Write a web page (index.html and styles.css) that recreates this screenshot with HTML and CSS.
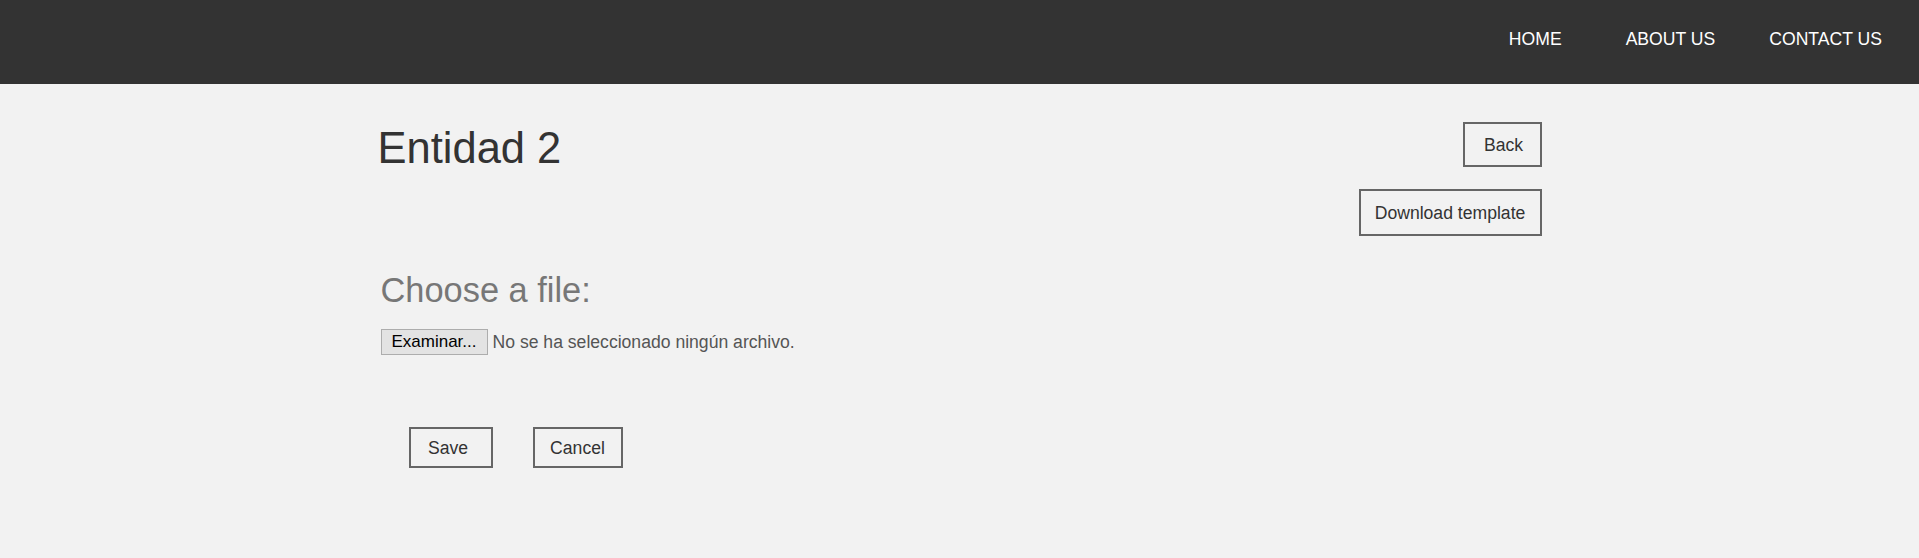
FILE: index.html
```html
<!DOCTYPE html>
<html lang="es">
<head>
<meta charset="utf-8">
<title>Entidad 2</title>
<link rel="stylesheet" href="styles.css">
</head>
<body>
<header class="site-header">
  <nav class="nav">
    <a class="nav-link nav-home" href="#">HOME</a>
    <a class="nav-link nav-about" href="#">ABOUT US</a>
    <a class="nav-link nav-contact" href="#">CONTACT US</a>
  </nav>
</header>
<main class="container">
  <div class="top-row">
    <h1 class="title">Entidad 2</h1>
    <div class="actions">
      <button class="btn btn-back">Back</button>
      <button class="btn btn-download">Download template</button>
    </div>
  </div>
  <section class="upload">
    <h2 class="upload-title">Choose a file:</h2>
    <div class="file-row">
      <button class="file-btn">Examinar...</button>
      <span class="file-name">No se ha seleccionado ningún archivo.</span>
    </div>
    <div class="form-actions">
      <button class="btn btn-save">Save</button>
      <button class="btn btn-cancel">Cancel</button>
    </div>
  </section>
</main>
</body>
</html>
```

FILE: styles.css
```css
html, body {
  margin: 0;
  padding: 0;
}
body {
  background: #f2f2f2;
  font-family: "Liberation Sans", Arial, sans-serif;
  color: #333;
}
.site-header {
  height: 84px;
  background: #333333;
  box-sizing: border-box;
}
.nav {
  display: flex;
  justify-content: flex-end;
  padding-top: 29px;
  padding-right: 37px;
}
.nav-link {
  color: #ffffff;
  text-decoration: none;
  font-size: 17.6px;
  line-height: 20px;
}
.nav-about {
  margin-left: 64px;
}
.nav-contact {
  margin-left: 54px;
}
.container {
  width: 1164px;
  margin: 0 auto;
}
.top-row {
  display: flex;
  justify-content: space-between;
  align-items: flex-start;
  padding-top: 38px;
}
.title {
  margin: 2px 0 0 0;
  font-size: 43.5px;
  line-height: 48px;
  font-weight: normal;
  color: #333;
}
.actions {
  display: flex;
  flex-direction: column;
  align-items: flex-end;
  gap: 22px;
}
.btn {
  box-sizing: border-box;
  display: flex;
  align-items: center;
  justify-content: center;
  padding: 0;
  background: transparent;
  border: 2px solid #666;
  border-radius: 0;
  color: #333;
  font-family: "Liberation Sans", Arial, sans-serif;
  font-size: 17.6px;
  line-height: 20px;
  cursor: pointer;
}
.btn-back {
  width: 79px;
  height: 45px;
  padding-left: 3px;
}
.btn-download {
  width: 183px;
  height: 47px;
}
.upload {
  padding-left: 3px;
}
.upload-title {
  margin: 35px 0 0 0;
  font-size: 34.4px;
  line-height: 38px;
  font-weight: normal;
  color: #777;
}
.file-row {
  display: flex;
  align-items: center;
  margin-top: 20px;
  height: 26px;
}
.file-btn {
  box-sizing: border-box;
  width: 107px;
  height: 26px;
  padding: 0;
  background: #e3e3e3;
  border: 1px solid #adadad;
  border-radius: 0;
  color: #000;
  font-family: "Liberation Sans", Arial, sans-serif;
  font-size: 17px;
  line-height: 20px;
}
.file-name {
  margin-left: 5px;
  color: #555;
  font-size: 17.6px;
  line-height: 20px;
}
.form-actions {
  display: flex;
  margin-top: 72px;
  padding-left: 28px;
  gap: 40px;
}
.btn-save {
  width: 84px;
  height: 41px;
  padding-right: 5px;
}
.btn-cancel {
  width: 90px;
  height: 41px;
}
```
